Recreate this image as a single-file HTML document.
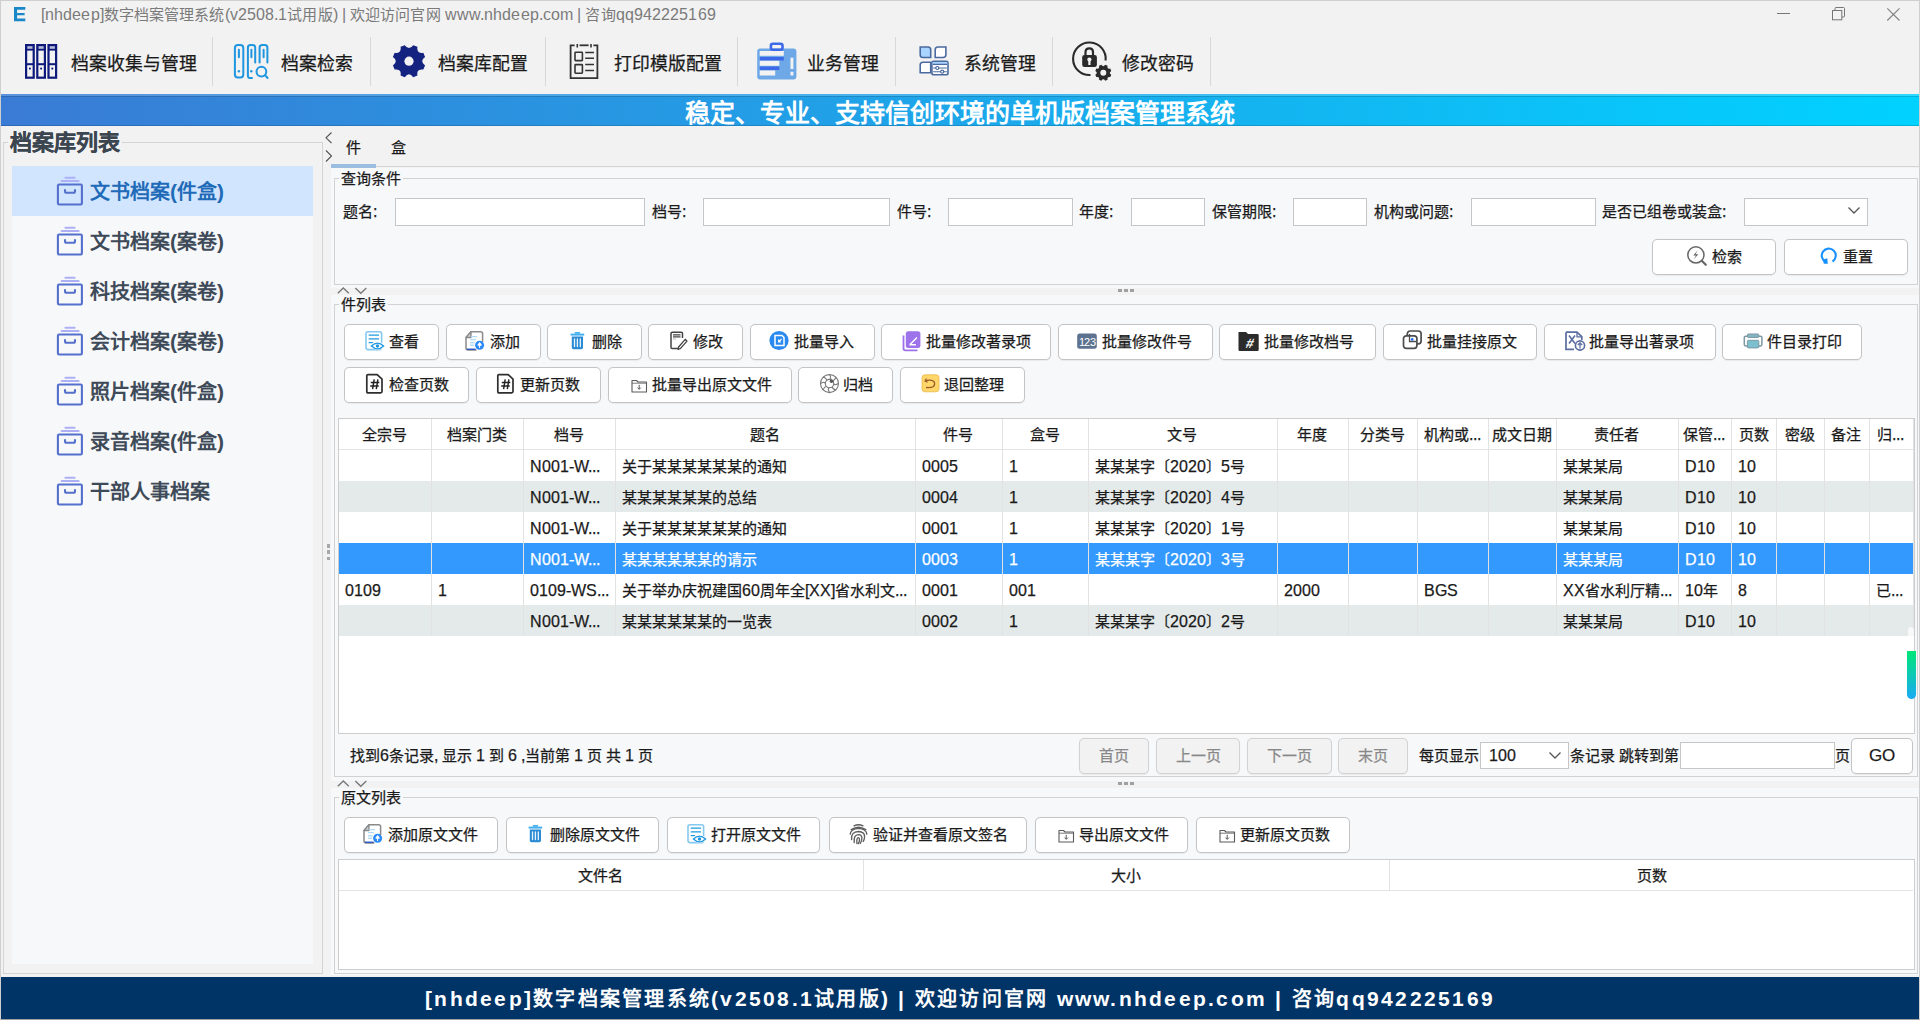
<!DOCTYPE html><html lang="zh-CN"><head><meta charset="utf-8"><style>
*{box-sizing:border-box;margin:0;padding:0}
@font-face{font-family:"Liberation Sans";src:local("Liberation Sans"),local("LiberationSans-Regular");font-weight:normal;size-adjust:106%}
@font-face{font-family:"Liberation Sans";src:local("Liberation Sans Bold"),local("LiberationSans-Bold");font-weight:bold;size-adjust:106%}
html,body{width:1920px;height:1020px;overflow:hidden;background:#f2f2f2;font-family:"Liberation Sans",sans-serif;color:#1a1a1a}
.a{position:absolute}
.t{position:absolute;white-space:nowrap;line-height:1;-webkit-text-stroke:0.25px currentColor}
svg{position:absolute;overflow:visible}
.btn{position:absolute;background:#fff;border:1px solid #c4c4c4;border-radius:5px;box-shadow:0 0.5px 1px rgba(0,0,0,.06)}
.inp{position:absolute;background:#fff;border:1px solid #c6c6c6}
</style></head><body>
<div class="a" style="left:0;top:0;width:1920px;height:1020px;border:1px solid #cfcfcf;border-bottom-color:#a0a0a0"></div>
<svg style="left:13.9px;top:6.5px" width="12" height="15"><path d="M0 0H11.3V2.7H3.1V5.9H10.6V8.2H3.1V11.6H11.3V14.3H0Z" fill="#1a88c8"/></svg>
<div class="t" style="left:41px;top:7px;font-size:15px;color:#7a7a7a;letter-spacing:0.1px;-webkit-text-stroke:0">[nhdeep]数字档案管理系统(v2508.1试用版) | 欢迎访问官网 www.nhdeep.com | 咨询qq942225169</div>
<div class="a" style="left:1777px;top:12.5px;width:12.5px;height:1px;background:#777"></div>
<svg style="left:1832px;top:7px" width="14" height="14"><rect x="0.5" y="3.5" width="9.3" height="9.3" fill="none" stroke="#777" stroke-width="1"/><path d="M3 3.3V1.5Q3 0.5 4 0.5H11.5Q12.5 0.5 12.5 1.5V9Q12.5 10 11.5 10H10" fill="none" stroke="#777" stroke-width="1"/></svg>
<svg style="left:1887px;top:7.5px" width="13" height="13"><path d="M0.3 0.3L12.5 12.5M12.5 0.3L0.3 12.5" stroke="#808080" stroke-width="1.1"/></svg>
<div class="t" style="left:71px;top:54.5px;font-size:17.85px;color:#1a1a1a">档案收集与管理</div>
<div class="a" style="left:212px;top:37px;width:1px;height:49px;background:#d8d8d8"></div>
<div class="t" style="left:281px;top:54.5px;font-size:17.85px;color:#1a1a1a">档案检索</div>
<div class="a" style="left:370px;top:37px;width:1px;height:49px;background:#d8d8d8"></div>
<div class="t" style="left:438px;top:54.5px;font-size:17.85px;color:#1a1a1a">档案库配置</div>
<div class="a" style="left:545px;top:37px;width:1px;height:49px;background:#d8d8d8"></div>
<div class="t" style="left:614px;top:54.5px;font-size:17.85px;color:#1a1a1a">打印模版配置</div>
<div class="a" style="left:737px;top:37px;width:1px;height:49px;background:#d8d8d8"></div>
<div class="t" style="left:807px;top:54.5px;font-size:17.85px;color:#1a1a1a">业务管理</div>
<div class="a" style="left:895px;top:37px;width:1px;height:49px;background:#d8d8d8"></div>
<div class="t" style="left:964px;top:54.5px;font-size:17.85px;color:#1a1a1a">系统管理</div>
<div class="a" style="left:1052px;top:37px;width:1px;height:49px;background:#d8d8d8"></div>
<div class="t" style="left:1122px;top:54.5px;font-size:17.85px;color:#1a1a1a">修改密码</div>
<div class="a" style="left:1210px;top:37px;width:1px;height:49px;background:#d8d8d8"></div>
<svg style="left:25.2px;top:44px" width="33" height="35" viewBox="0 0 33 35"><rect x="0.0" y="0" width="9.8" height="34.8" fill="#0d1a7c"/><rect x="2.3" y="2.2" width="5.2" height="2.6" fill="#b8bcd8"/><rect x="2.2" y="6.6" width="5.4" height="12.6" fill="#f2f2f2"/><rect x="2.2" y="21.2" width="5.4" height="11.4" fill="#f2f2f2"/><circle cx="4.9" cy="24.6" r="1.05" fill="#0d1a7c"/><rect x="11.2" y="0" width="9.8" height="34.8" fill="#0d1a7c"/><rect x="13.5" y="2.2" width="5.2" height="2.6" fill="#b8bcd8"/><rect x="13.399999999999999" y="6.6" width="5.4" height="12.6" fill="#f2f2f2"/><rect x="13.399999999999999" y="21.2" width="5.4" height="11.4" fill="#f2f2f2"/><circle cx="16.1" cy="24.6" r="1.05" fill="#0d1a7c"/><rect x="22.4" y="0" width="9.8" height="34.8" fill="#0d1a7c"/><rect x="24.7" y="2.2" width="5.2" height="2.6" fill="#b8bcd8"/><rect x="24.599999999999998" y="6.6" width="5.4" height="12.6" fill="#f2f2f2"/><rect x="24.599999999999998" y="21.2" width="5.4" height="11.4" fill="#f2f2f2"/><circle cx="27.299999999999997" cy="24.6" r="1.05" fill="#0d1a7c"/></svg>
<svg style="left:228px;top:38px" width="46" height="46" viewBox="0 0 46 46"><g fill="none" stroke="#1e96e0" stroke-width="2" stroke-linecap="round">
<rect x="6.9" y="6.9" width="8.4" height="32.7" rx="3"/>
<path d="M24 40 H22 Q19.9 40 19.9 37.5 V9.5 Q19.9 6.9 22.5 6.9 H24.7 Q27.2 6.9 27.2 9.5 V24.5"/>
<path d="M31.6 24.5 V9.5 Q31.6 6.9 34.2 6.9 H36.8 Q39.4 6.9 39.4 9.5 V24.5"/>
<path d="M10.9 11.7V19.3M23.4 11.7V19.3M35.6 11.7V19.3"/>
<circle cx="33.4" cy="33.6" r="4.9"/>
<path d="M37.2 37.4L39.6 40"/>
</g><circle cx="10.9" cy="33.2" r="1.2" fill="#1e96e0"/><circle cx="23.3" cy="33.2" r="1.2" fill="#1e96e0"/></svg>
<svg style="left:388px;top:40px" width="42" height="42" viewBox="0 0 42 42"><path d="M25.21 5.14L29.38 6.87Q28.21 13.99 35.33 12.82L35.33 12.82L37.06 16.99Q31.20 21.20 37.06 25.41L37.06 25.41L35.33 29.58Q28.21 28.41 29.38 35.53L29.38 35.53L25.21 37.26Q21.00 31.40 16.79 37.26L16.79 37.26L12.62 35.53Q13.79 28.41 6.67 29.58L6.67 29.58L4.94 25.41Q10.80 21.20 4.94 16.99L4.94 16.99L6.67 12.82Q13.79 13.99 12.62 6.87L12.62 6.87L16.79 5.14Q21.00 11.00 25.21 5.14Z" fill="#13237f"/><circle cx="21" cy="21.2" r="4.6" fill="#f2f2f2"/></svg>
<svg style="left:564px;top:38px" width="40" height="46" viewBox="0 0 40 46"><g fill="none" stroke="#333" stroke-width="1.8">
<path d="M10.6 7.3H6.6V40.2H33.4V7.3H29.4"/>
<path d="M15.6 7.3H24.6"/>
<path d="M13.3 6V9.5M27 6V9.5" stroke-width="1.6"/>
<rect x="11" y="14.3" width="7.4" height="8.3" stroke-width="1.6" rx="0.6"/>
<rect x="11" y="26.6" width="7.4" height="8.6" stroke-width="1.6" rx="0.6"/>
<path d="M21.2 14.6H30M21.2 20.2H30M21.2 26.4H30M21.2 32.4H30" stroke-width="1.5"/>
</g></svg>
<svg style="left:752px;top:38px" width="48" height="46" viewBox="0 0 48 46"><rect x="5.2" y="10.4" width="39.2" height="31.1" rx="3" fill="#6ea8e6"/>
<rect x="18.9" y="5.7" width="11.6" height="6" rx="2" fill="none" stroke="#3d68e8" stroke-width="2.6"/>
<rect x="7.7" y="13" width="24.1" height="4.8" fill="#f2f2f2"/>
<rect x="7.9" y="19" width="23.9" height="3.5" fill="#3d68e8"/>
<rect x="7.7" y="22.8" width="19.6" height="5" fill="#f2f2f2"/>
<rect x="7.9" y="28.5" width="19.4" height="3.5" fill="#3d68e8"/>
<rect x="7.7" y="32.5" width="15.5" height="5" fill="#f2f2f2"/>
<rect x="38.5" y="19.7" width="2.9" height="11.3" fill="#f2f2f2"/>
<rect x="38.5" y="33.8" width="2.9" height="3.7" fill="#f2f2f2"/></svg>
<svg style="left:914px;top:40px" width="40" height="42" viewBox="0 0 40 42"><g stroke="#4a6aa0" stroke-width="1.6">
<path d="M6.2 7H14Q16.7 7 16.7 9.7V17.5H9Q6.2 17.5 6.2 14.7Z" fill="#a8d4ff"/>
<path d="M23.9 7H31.9V14.5Q31.9 17.5 29 17.5H21.2V9.7Q21.2 7 23.9 7Z" fill="#fff"/>
<path d="M9 22.2H16.7V32.7H6.2V25Q6.2 22.2 9 22.2Z" fill="#fff"/>
<rect x="17.9" y="21.2" width="16.1" height="13.6" rx="1.8" fill="#fff"/>
</g>
<rect x="18.7" y="22" width="14.5" height="2.4" fill="#a8d4ff"/>
<g stroke="#4a6aa0" stroke-width="1.2" fill="#fff">
<path d="M19 24.4H33" stroke-width="1.3"/>
<path d="M19.2 28H32.8M19.2 31.7H32.8" stroke-width="1.1"/>
<circle cx="23.3" cy="28" r="1.5"/><circle cx="28.2" cy="31.7" r="1.5"/>
</g></svg>
<svg style="left:1066px;top:36px" width="50" height="50" viewBox="0 0 50 50"><path d="M39.6 24.5 A16.3 16.3 0 1 0 24.5 39" fill="none" stroke="#2a2a2a" stroke-width="2.1" stroke-linecap="butt"/>
<path d="M19.5 19.5V16.2Q19.5 12.3 23.3 12.3Q27 12.3 27 16.2V19.5" fill="none" stroke="#2a2a2a" stroke-width="2.2"/>
<rect x="16.2" y="19" width="14.7" height="11.9" rx="2.2" fill="#2a2a2a"/>
<circle cx="23.4" cy="23.6" r="2.1" fill="#f2f2f2"/><rect x="22.3" y="24" width="2.2" height="5" fill="#f2f2f2"/>
<circle cx="37.3" cy="36.8" r="8.8" fill="#f2f2f2"/>
<path d="M39.21 28.83L41.58 29.81Q40.84 33.26 44.29 32.52L44.29 32.52L45.27 34.89Q42.30 36.80 45.27 38.71L45.27 38.71L44.29 41.08Q40.84 40.34 41.58 43.79L41.58 43.79L39.21 44.77Q37.30 41.80 35.39 44.77L35.39 44.77L33.02 43.79Q33.76 40.34 30.31 41.08L30.31 41.08L29.33 38.71Q32.30 36.80 29.33 34.89L29.33 34.89L30.31 32.52Q33.76 33.26 33.02 29.81L33.02 29.81L35.39 28.83Q37.30 31.80 39.21 28.83Z" fill="#2a2a2a"/><circle cx="37.3" cy="36.8" r="3" fill="#f2f2f2"/></svg>
<div class="a" style="left:1px;top:94px;width:1918px;height:32px;background:linear-gradient(90deg,#3a7bd5,#00d2ff)"></div>
<div class="a" style="left:1px;top:94px;width:1918px;height:2px;background:rgba(255,255,255,.18)"></div>
<div class="a" style="left:1px;top:96px;width:1918px;height:1px;background:rgba(0,0,0,.15)"></div>
<div class="a" style="left:1px;top:125px;width:1918px;height:1px;background:rgba(0,0,0,.15)"></div>
<div class="t" style="left:0;top:101px;width:1920px;text-align:center;font-size:25px;font-weight:bold;color:#fff;-webkit-text-stroke:0">稳定、专业、支持信创环境的单机版档案管理系统</div>
<div class="a" style="left:3px;top:142px;width:320px;height:832px;border:1px solid #d4d4d4;border-top-color:#d4d4d4"></div>
<div class="a" style="left:12px;top:166px;width:301px;height:797.5px;background:#f7f8fa"></div>
<div class="t" style="left:8px;top:131px;padding:0 2px;background:#f2f2f2;font-size:22px;font-weight:bold;color:#3c4650;-webkit-text-stroke:0.2px #3c4650">档案库列表</div>
<div class="a" style="left:12px;top:166px;width:301px;height:50px;background:#d1e5fe"></div>
<div class="t" style="left:90px;top:182px;font-size:20px;font-weight:bold;color:#1f6bb8;-webkit-text-stroke:0">文书档案(件盒)</div>
<svg style="left:56px;top:176px" width="28" height="30" viewBox="0 0 28 30"><path d="M9.4 1.7H18.6" stroke="#aeb0f6" stroke-width="2" stroke-linecap="round"/><path d="M5.6 4.9H22.6" stroke="#aeb0f6" stroke-width="2" stroke-linecap="round"/><rect x="1.9" y="8.5" width="24" height="20" rx="1.2" fill="none" stroke="#5570cc" stroke-width="2.1"/><path d="M9 14V15.2Q9 16.7 10.5 16.7H17.5Q19 16.7 19 15.2V14" fill="none" stroke="#5570cc" stroke-width="2.1" stroke-linecap="round"/></svg>
<div class="t" style="left:90px;top:232px;font-size:20px;font-weight:bold;color:#3e4a58;-webkit-text-stroke:0">文书档案(案卷)</div>
<svg style="left:56px;top:226px" width="28" height="30" viewBox="0 0 28 30"><path d="M9.4 1.7H18.6" stroke="#aeb0f6" stroke-width="2" stroke-linecap="round"/><path d="M5.6 4.9H22.6" stroke="#aeb0f6" stroke-width="2" stroke-linecap="round"/><rect x="1.9" y="8.5" width="24" height="20" rx="1.2" fill="none" stroke="#5570cc" stroke-width="2.1"/><path d="M9 14V15.2Q9 16.7 10.5 16.7H17.5Q19 16.7 19 15.2V14" fill="none" stroke="#5570cc" stroke-width="2.1" stroke-linecap="round"/></svg>
<div class="t" style="left:90px;top:282px;font-size:20px;font-weight:bold;color:#3e4a58;-webkit-text-stroke:0">科技档案(案卷)</div>
<svg style="left:56px;top:276px" width="28" height="30" viewBox="0 0 28 30"><path d="M9.4 1.7H18.6" stroke="#aeb0f6" stroke-width="2" stroke-linecap="round"/><path d="M5.6 4.9H22.6" stroke="#aeb0f6" stroke-width="2" stroke-linecap="round"/><rect x="1.9" y="8.5" width="24" height="20" rx="1.2" fill="none" stroke="#5570cc" stroke-width="2.1"/><path d="M9 14V15.2Q9 16.7 10.5 16.7H17.5Q19 16.7 19 15.2V14" fill="none" stroke="#5570cc" stroke-width="2.1" stroke-linecap="round"/></svg>
<div class="t" style="left:90px;top:332px;font-size:20px;font-weight:bold;color:#3e4a58;-webkit-text-stroke:0">会计档案(案卷)</div>
<svg style="left:56px;top:326px" width="28" height="30" viewBox="0 0 28 30"><path d="M9.4 1.7H18.6" stroke="#aeb0f6" stroke-width="2" stroke-linecap="round"/><path d="M5.6 4.9H22.6" stroke="#aeb0f6" stroke-width="2" stroke-linecap="round"/><rect x="1.9" y="8.5" width="24" height="20" rx="1.2" fill="none" stroke="#5570cc" stroke-width="2.1"/><path d="M9 14V15.2Q9 16.7 10.5 16.7H17.5Q19 16.7 19 15.2V14" fill="none" stroke="#5570cc" stroke-width="2.1" stroke-linecap="round"/></svg>
<div class="t" style="left:90px;top:382px;font-size:20px;font-weight:bold;color:#3e4a58;-webkit-text-stroke:0">照片档案(件盒)</div>
<svg style="left:56px;top:376px" width="28" height="30" viewBox="0 0 28 30"><path d="M9.4 1.7H18.6" stroke="#aeb0f6" stroke-width="2" stroke-linecap="round"/><path d="M5.6 4.9H22.6" stroke="#aeb0f6" stroke-width="2" stroke-linecap="round"/><rect x="1.9" y="8.5" width="24" height="20" rx="1.2" fill="none" stroke="#5570cc" stroke-width="2.1"/><path d="M9 14V15.2Q9 16.7 10.5 16.7H17.5Q19 16.7 19 15.2V14" fill="none" stroke="#5570cc" stroke-width="2.1" stroke-linecap="round"/></svg>
<div class="t" style="left:90px;top:432px;font-size:20px;font-weight:bold;color:#3e4a58;-webkit-text-stroke:0">录音档案(件盒)</div>
<svg style="left:56px;top:426px" width="28" height="30" viewBox="0 0 28 30"><path d="M9.4 1.7H18.6" stroke="#aeb0f6" stroke-width="2" stroke-linecap="round"/><path d="M5.6 4.9H22.6" stroke="#aeb0f6" stroke-width="2" stroke-linecap="round"/><rect x="1.9" y="8.5" width="24" height="20" rx="1.2" fill="none" stroke="#5570cc" stroke-width="2.1"/><path d="M9 14V15.2Q9 16.7 10.5 16.7H17.5Q19 16.7 19 15.2V14" fill="none" stroke="#5570cc" stroke-width="2.1" stroke-linecap="round"/></svg>
<div class="t" style="left:90px;top:482px;font-size:20px;font-weight:bold;color:#3e4a58;-webkit-text-stroke:0">干部人事档案</div>
<svg style="left:56px;top:476px" width="28" height="30" viewBox="0 0 28 30"><path d="M9.4 1.7H18.6" stroke="#aeb0f6" stroke-width="2" stroke-linecap="round"/><path d="M5.6 4.9H22.6" stroke="#aeb0f6" stroke-width="2" stroke-linecap="round"/><rect x="1.9" y="8.5" width="24" height="20" rx="1.2" fill="none" stroke="#5570cc" stroke-width="2.1"/><path d="M9 14V15.2Q9 16.7 10.5 16.7H17.5Q19 16.7 19 15.2V14" fill="none" stroke="#5570cc" stroke-width="2.1" stroke-linecap="round"/></svg>
<svg style="left:325px;top:132px" width="8" height="30"><path d="M6.5 0.5L1 5.8L6.5 11" fill="none" stroke="#555" stroke-width="1.1"/><path d="M1 18.5L6.5 24L1 29.5" fill="none" stroke="#555" stroke-width="1.1"/></svg>
<div class="a" style="left:326.5px;top:544.0px;width:3.5px;height:3.5px;background:#a8a8a8"></div><div class="a" style="left:326.5px;top:550.3px;width:3.5px;height:3.5px;background:#a8a8a8"></div><div class="a" style="left:326.5px;top:556.6px;width:3.5px;height:3.5px;background:#a8a8a8"></div>
<div class="t" style="left:346px;top:140px;font-size:15px;color:#1a1a1a">件</div>
<div class="t" style="left:391px;top:140px;font-size:15px;color:#1a1a1a">盒</div>
<div class="a" style="left:331px;top:166px;width:1589px;height:1px;background:#d4d4d4"></div>
<div class="a" style="left:331px;top:164px;width:45px;height:4px;background:#9bbde0"></div>
<div class="a" style="left:331px;top:168px;width:1588px;height:807px;background:#f7f8fa"></div>
<div class="a" style="left:334px;top:178px;width:1584px;height:107px;border:1px solid #d2d2d2"></div>
<div class="t" style="left:339px;top:171px;padding:0 2px;background:#f7f8fa;font-size:15px;color:#1a1a1a">查询条件</div>
<div class="t" style="left:343px;top:204px;font-size:15px;color:#1a1a1a">题名:</div>
<div class="inp" style="left:395px;top:198px;width:250px;height:28px"></div>
<div class="t" style="left:652px;top:204px;font-size:15px;color:#1a1a1a">档号:</div>
<div class="inp" style="left:703px;top:198px;width:187px;height:28px"></div>
<div class="t" style="left:897px;top:204px;font-size:15px;color:#1a1a1a">件号:</div>
<div class="inp" style="left:948px;top:198px;width:125px;height:28px"></div>
<div class="t" style="left:1079px;top:204px;font-size:15px;color:#1a1a1a">年度:</div>
<div class="inp" style="left:1131px;top:198px;width:74px;height:28px"></div>
<div class="t" style="left:1212px;top:204px;font-size:15px;color:#1a1a1a">保管期限:</div>
<div class="inp" style="left:1293px;top:198px;width:74px;height:28px"></div>
<div class="t" style="left:1374px;top:204px;font-size:15px;color:#1a1a1a">机构或问题:</div>
<div class="inp" style="left:1471px;top:198px;width:125px;height:28px"></div>
<div class="t" style="left:1602px;top:204px;font-size:15px;color:#1a1a1a">是否已组卷或装盒:</div>
<div class="inp" style="left:1744px;top:198px;width:124px;height:28px"></div>
<svg style="left:1848px;top:207px" width="12" height="8"><path d="M0.5 0.5L6 6L11.5 0.5" fill="none" stroke="#555" stroke-width="1.3"/></svg>
<div class="btn" style="left:1652px;top:239px;width:124px;height:36px"></div>
<div class="t" style="left:1712px;top:249px;font-size:15px">检索</div>
<div class="btn" style="left:1784px;top:239px;width:124px;height:36px"></div>
<div class="t" style="left:1843px;top:249px;font-size:15px">重置</div>
<svg style="left:1680px;top:242px" width="30" height="30"><circle cx="15.9" cy="12.9" r="8.1" fill="none" stroke="#666" stroke-width="1.5"/><path d="M21.8 18.8L25.8 22.8" stroke="#666" stroke-width="2.2" stroke-linecap="round"/><path d="M17.6 8.6L13.2 13.6H16L13.6 17.6L18.4 12.2H15.6Z" fill="#666"/></svg>
<svg style="left:1812px;top:242px" width="30" height="30"><path d="M20.5 19.5A7 7 0 1 0 14 20" fill="none" stroke="#1a90ff" stroke-width="2.1"/><path d="M11 17.5L15.3 16.2L15.8 21.8L11.8 21.8Z" fill="#1a90ff"/></svg>
<div class="a" style="left:331px;top:288px;width:1588px;height:6.5px;background:#f2f2f2"></div>
<svg style="left:337px;top:287px" width="32" height="8"><path d="M0.8 6.3L6.3 1L11.8 6.3" fill="none" stroke="#777" stroke-width="1.3"/><path d="M18.3 1L23.8 6.3L29.3 1" fill="none" stroke="#777" stroke-width="1.3"/></svg>
<div class="a" style="left:1118px;top:288.5px;width:3.5px;height:3.5px;background:#a0a0a0"></div>
<div class="a" style="left:1124px;top:288.5px;width:3.5px;height:3.5px;background:#a0a0a0"></div>
<div class="a" style="left:1130px;top:288.5px;width:3.5px;height:3.5px;background:#a0a0a0"></div>
<div class="a" style="left:334px;top:304px;width:1584px;height:473px;border:1px solid #d2d2d2"></div>
<div class="t" style="left:339px;top:297px;padding:0 2px;background:#f7f8fa;font-size:15px;color:#1a1a1a">件列表</div>
<div class="btn" style="left:344px;top:324px;width:95px;height:36px"></div>
<div class="t" style="left:388.5px;top:334px;font-size:15px">查看</div>
<svg style="left:364.5px;top:331px" width="20" height="20" viewBox="0 0 20 20"><rect x="1" y="0.8" width="15.6" height="17.8" rx="2" fill="none" stroke="#86c8ef" stroke-width="1.6"/>
<path d="M4.2 4.2H13.5M4.2 7.9H13.5M4.2 11.7H7.5" stroke="#1f9ae0" stroke-width="1.3" stroke-linecap="round"/>
<ellipse cx="12.6" cy="15" rx="6.6" ry="3.8" fill="#fff"/>
<path d="M6.4 15Q12.4 9.2 18.6 15Q12.4 20.8 6.4 15Z" fill="#fff" stroke="#1e96e0" stroke-width="1.3"/>
<circle cx="12.5" cy="15" r="1.7" fill="#1e96e0"/></svg>
<div class="btn" style="left:445.5px;top:324px;width:95px;height:36px"></div>
<div class="t" style="left:490.0px;top:334px;font-size:15px">添加</div>
<svg style="left:466.0px;top:331px" width="20" height="20" viewBox="0 0 20 20"><path d="M16.6 11V2.6Q16.6 0.7 14.7 0.7H5L0 6.5V17Q0 18.9 1.9 18.9H10.5" fill="#fff" stroke="#8a8a8a" stroke-width="1.5"/>
<path d="M5 0.7V6.5H0Z" fill="#c8d3dc" stroke="#8a8a8a" stroke-width="1.3" stroke-linejoin="round"/>
<path d="M5 5.6H11M4 8.6H10M4 11.8H8.5M4 14.3H8" stroke="#b5dbf8" stroke-width="1.4"/>
<path d="M1 18.2H9.5" stroke="#1144cc" stroke-width="1.2"/>
<circle cx="13.6" cy="14.2" r="4.5" fill="#2b8af8"/>
<path d="M13.6 11.5L11.8 14.2H15.4Z M13.6 14V17" stroke="#fff" stroke-width="1" fill="#fff"/></svg>
<div class="btn" style="left:547px;top:324px;width:95px;height:36px"></div>
<div class="t" style="left:591.5px;top:334px;font-size:15px">删除</div>
<svg style="left:567.5px;top:331px" width="20" height="20" viewBox="0 0 20 20"><path d="M7.5 1.8H11.3" stroke="#45b0f0" stroke-width="1.8" stroke-linecap="round"/>
<path d="M2.6 3.6H16.2" stroke="#45b0f0" stroke-width="2"/>
<path d="M3.8 5.6H15V16.5Q15 18.2 13.3 18.2H5.5Q3.8 18.2 3.8 16.5Z" fill="#2a8ad4"/>
<path d="M6.5 8V15.6M9.4 8V15.6M12.3 8V15.6" stroke="#e8f4fc" stroke-width="1.3" stroke-linecap="round"/></svg>
<div class="btn" style="left:648px;top:324px;width:95px;height:36px"></div>
<div class="t" style="left:692.5px;top:334px;font-size:15px">修改</div>
<svg style="left:668.5px;top:331px" width="20" height="20" viewBox="0 0 20 20"><path d="M13.5 7V2.5Q13.5 1.2 12.2 1.2H3.3Q2 1.2 2 2.5V16.2Q2 17.5 3.3 17.5H9" fill="none" stroke="#444" stroke-width="1.5"/>
<path d="M4 3.8H11.5M4 5.8H11.5" stroke="#444" stroke-width="1.2"/>
<path d="M4 8H7" stroke="#aaa" stroke-width="0.8"/>
<path d="M16.2 8.3L18 10.1L11.3 17.6L9 18.3L9.6 16Z" fill="#fff" stroke="#444" stroke-width="1.3" stroke-linejoin="round"/></svg>
<div class="btn" style="left:749.5px;top:324px;width:125px;height:36px"></div>
<div class="t" style="left:794.0px;top:334px;font-size:15px">批量导入</div>
<svg style="left:770.0px;top:331px" width="20" height="20" viewBox="0 0 20 20"><circle cx="9" cy="9.5" r="9.6" fill="#2a8af0"/>
<path d="M5 4.5H12L14 6.5V14.5H5Z" fill="none" stroke="#fff" stroke-width="1.5"/>
<path d="M11.5 8L8.8 10.8M8.6 8.5V11H11" fill="none" stroke="#fff" stroke-width="1.2"/></svg>
<div class="btn" style="left:881px;top:324px;width:170px;height:36px"></div>
<div class="t" style="left:925.5px;top:334px;font-size:15px">批量修改著录项</div>
<svg style="left:901.5px;top:331px" width="20" height="20" viewBox="0 0 20 20"><path d="M1.5 4.5V17.5Q1.5 19.3 3.3 19.3H15.5" fill="none" stroke="#9d72ea" stroke-width="1.8"/>
<rect x="3.8" y="0.3" width="14.6" height="16.8" rx="2.5" fill="#9d72ea"/>
<path d="M10 1.5 L17 1.5" stroke="#b493f0" stroke-width="0"/>
<path d="M8 13.5L15 6.5M7.5 13.8H14" stroke="#fff" stroke-width="1.5"/></svg>
<div class="btn" style="left:1057.5px;top:324px;width:155px;height:36px"></div>
<div class="t" style="left:1102.0px;top:334px;font-size:15px">批量修改件号</div>
<svg style="left:1078.0px;top:331px" width="20" height="20" viewBox="0 0 20 20"><rect x="-0.8" y="2.5" width="19.6" height="15.2" rx="2.5" fill="#5c7290"/>
<text x="9" y="14.6" text-anchor="middle" font-family="Liberation Sans" font-size="10.8" fill="#fff" letter-spacing="-0.9">123</text></svg>
<div class="btn" style="left:1218.5px;top:324px;width:157px;height:36px"></div>
<div class="t" style="left:1264.0px;top:334px;font-size:15px">批量修改档号</div>
<svg style="left:1240.0px;top:331px" width="20" height="20" viewBox="0 0 20 20"><path d="M-1.5 1H6L8 3H17.5Q18.7 3 18.7 4.2V18.8Q18.7 20 17.5 20H-0.3Q-1.5 20 -1.5 18.8Z" fill="#2b2b2b"/>
<text x="8.5" y="16.8" text-anchor="middle" font-family="Liberation Sans" font-weight="bold" font-size="13" fill="#fff" font-style="italic">#</text></svg>
<div class="btn" style="left:1383px;top:324px;width:154px;height:36px"></div>
<div class="t" style="left:1427.0px;top:334px;font-size:15px">批量挂接原文</div>
<svg style="left:1403.0px;top:331px" width="20" height="20" viewBox="0 0 20 20"><rect x="4.3" y="0" width="13.8" height="12.8" rx="2.8" fill="#fff" stroke="#4c4c4c" stroke-width="1.7"/>
<rect x="0.5" y="4.8" width="13.4" height="12.6" rx="2.8" fill="#fff" stroke="#4c4c4c" stroke-width="1.7"/>
<path d="M6.5 3 V 10.5 H 13.5" fill="none" stroke="#4c4c4c" stroke-width="1.3"/>
<circle cx="9.2" cy="8.4" r="1.3" fill="#1c6cf0"/></svg>
<div class="btn" style="left:1543.5px;top:324px;width:172px;height:36px"></div>
<div class="t" style="left:1589.0px;top:334px;font-size:15px">批量导出著录项</div>
<svg style="left:1565.0px;top:331px" width="20" height="20" viewBox="0 0 20 20"><path d="M1 1.2H12L16.8 5.6V9" fill="none" stroke="#5a6ea0" stroke-width="1.7"/>
<path d="M12 1.2V5.8H16.8" fill="none" stroke="#5a6ea0" stroke-width="1.3"/>
<path d="M1 1.2V18.3H9" fill="none" stroke="#5a6ea0" stroke-width="1.7"/>
<path d="M4 4.5L10 12.5M10 4.5L4 12.5" stroke="#5a6ea0" stroke-width="1.6"/>
<circle cx="15" cy="14.5" r="4.6" fill="#fff" stroke="#5a6ea0" stroke-width="1.6"/>
<path d="M15 17.5V12M12.8 14L15 11.8L17.2 14" fill="none" stroke="#5a6ea0" stroke-width="1.3"/></svg>
<div class="btn" style="left:1722px;top:324px;width:140px;height:36px"></div>
<div class="t" style="left:1766.5px;top:334px;font-size:15px">件目录打印</div>
<svg style="left:1742.5px;top:331px" width="20" height="20" viewBox="0 0 20 20"><g transform="translate(0 2.3)"><rect x="1.3" y="3" width="17.6" height="9.6" rx="1.3" fill="#fff" stroke="#7d98a2" stroke-width="1.5"/>
<rect x="4.4" y="0.7" width="11.4" height="3.5" rx="1" fill="#86b4c2" stroke="#7d98a2" stroke-width="1"/>
<rect x="4.4" y="7" width="11.4" height="7.6" rx="1" fill="#7cc0cf" stroke="#7d98a2" stroke-width="1"/></g></svg>
<div class="btn" style="left:344px;top:367px;width:125px;height:35.5px"></div>
<div class="t" style="left:388.5px;top:377px;font-size:15px">检查页数</div>
<svg style="left:364.5px;top:374px" width="20" height="20" viewBox="0 0 20 20"><path d="M1.8 1.8Q1.8 0.6 3 0.6H12.2L17 5.2V17.6Q17 18.9 15.7 18.9H3Q1.8 18.9 1.8 17.6Z" fill="#fff" stroke="#2e2e2e" stroke-width="1.7" stroke-linejoin="round"/>
<path d="M9.2 5.3L7.6 15.2M12.9 5.3L11.3 15.2M5.8 8.4H14.3M5.2 12H13.7" stroke="#222" stroke-width="1.45"/></svg>
<div class="btn" style="left:475.5px;top:367px;width:125px;height:35.5px"></div>
<div class="t" style="left:520.0px;top:377px;font-size:15px">更新页数</div>
<svg style="left:496.0px;top:374px" width="20" height="20" viewBox="0 0 20 20"><path d="M1.8 1.8Q1.8 0.6 3 0.6H12.2L17 5.2V17.6Q17 18.9 15.7 18.9H3Q1.8 18.9 1.8 17.6Z" fill="#fff" stroke="#2e2e2e" stroke-width="1.7" stroke-linejoin="round"/>
<path d="M9.2 5.3L7.6 15.2M12.9 5.3L11.3 15.2M5.8 8.4H14.3M5.2 12H13.7" stroke="#222" stroke-width="1.45"/></svg>
<div class="btn" style="left:607.5px;top:367px;width:184px;height:35.5px"></div>
<div class="t" style="left:651.5px;top:377px;font-size:15px">批量导出原文文件</div>
<svg style="left:627.5px;top:374px" width="20" height="20" viewBox="0 0 20 20"><path d="M4 6.5H8.5L10 8H18.5V18H4Z" fill="#fff" stroke="#5a5a5a" stroke-width="1.1" stroke-linejoin="round"/>
<path d="M4 9.2H18.5" stroke="#5a5a5a" stroke-width="0.8"/>
<path d="M11.2 10.8V15.2M9.5 13.6L11.2 15.3L12.9 13.6" fill="none" stroke="#5a5a5a" stroke-width="1"/></svg>
<div class="btn" style="left:798px;top:367px;width:95px;height:35.5px"></div>
<div class="t" style="left:842.5px;top:377px;font-size:15px">归档</div>
<svg style="left:818.5px;top:374px" width="20" height="20" viewBox="0 0 20 20"><g fill="none" stroke="#777" stroke-width="1.1">
<circle cx="10.5" cy="9.6" r="9"/>
<circle cx="10.5" cy="9.6" r="4.2"/>
<path d="M10.5 0.6Q13 5 10.5 5.4M19.5 9.6Q15 12 14.7 9.6M10.5 18.6Q8 14 10.5 13.8M1.5 9.6Q6 7 6.3 9.6M3.9 3.2Q8 4 7.5 6.7M17.1 3.2Q15 7 13.5 6.7M17.1 16Q13 15 13.5 12.5M3.9 16Q6 12 7.5 12.5"/>
</g><circle cx="12.5" cy="7.3" r="1.8" fill="#555"/></svg>
<div class="btn" style="left:899.5px;top:367px;width:125px;height:35.5px"></div>
<div class="t" style="left:944.0px;top:377px;font-size:15px">退回整理</div>
<svg style="left:920.0px;top:374px" width="20" height="20" viewBox="0 0 20 20"><rect x="2" y="0.8" width="17" height="17" rx="3" fill="#ffd66a" stroke="#e8b84a" stroke-width="0.8"/>
<path d="M6.5 4.5L5 7L7.6 8.2" fill="none" stroke="#9a5a2a" stroke-width="1.2"/>
<path d="M5.3 7Q10 5 14 7.5Q15.5 10 13.5 12.5Q11 14 6 13.5" fill="none" stroke="#9a5a2a" stroke-width="1.3"/></svg>
<!--BICONS-->
<div class="a" style="left:338px;top:418px;width:1577px;height:316px;background:#fff;border:1px solid #cdcdcd"></div>
<div class="a" style="left:339px;top:450px;width:1574px;height:31px;background:#fff"></div>
<div class="a" style="left:339px;top:481px;width:1574px;height:31px;background:#e4eae9"></div>
<div class="a" style="left:339px;top:512px;width:1574px;height:31px;background:#fff"></div>
<div class="a" style="left:339px;top:543px;width:1574px;height:31px;background:#3399ff"></div>
<div class="a" style="left:339px;top:574px;width:1574px;height:31px;background:#fff"></div>
<div class="a" style="left:339px;top:605px;width:1574px;height:31px;background:#e4eae9"></div>
<div class="a" style="left:339px;top:449px;width:1574px;height:1px;background:#e4e4e4"></div>
<div class="a" style="left:430.6px;top:419px;width:1px;height:217px;background:#e2e2e2"></div>
<div class="a" style="left:523.0px;top:419px;width:1px;height:217px;background:#e2e2e2"></div>
<div class="a" style="left:615.3px;top:419px;width:1px;height:217px;background:#e2e2e2"></div>
<div class="a" style="left:914.5px;top:419px;width:1px;height:217px;background:#e2e2e2"></div>
<div class="a" style="left:1002.0px;top:419px;width:1px;height:217px;background:#e2e2e2"></div>
<div class="a" style="left:1088.4px;top:419px;width:1px;height:217px;background:#e2e2e2"></div>
<div class="a" style="left:1276.6px;top:419px;width:1px;height:217px;background:#e2e2e2"></div>
<div class="a" style="left:1348.4px;top:419px;width:1px;height:217px;background:#e2e2e2"></div>
<div class="a" style="left:1417.2px;top:419px;width:1px;height:217px;background:#e2e2e2"></div>
<div class="a" style="left:1487.5px;top:419px;width:1px;height:217px;background:#e2e2e2"></div>
<div class="a" style="left:1555.5px;top:419px;width:1px;height:217px;background:#e2e2e2"></div>
<div class="a" style="left:1677.5px;top:419px;width:1px;height:217px;background:#e2e2e2"></div>
<div class="a" style="left:1731.0px;top:419px;width:1px;height:217px;background:#e2e2e2"></div>
<div class="a" style="left:1776.0px;top:419px;width:1px;height:217px;background:#e2e2e2"></div>
<div class="a" style="left:1823.8px;top:419px;width:1px;height:217px;background:#e2e2e2"></div>
<div class="a" style="left:1868.8px;top:419px;width:1px;height:217px;background:#e2e2e2"></div>
<div class="a" style="left:1912.5px;top:419px;width:1px;height:217px;background:#e2e2e2"></div>
<div class="t" style="left:338.0px;top:427px;width:92.6px;text-align:center;font-size:15px">全宗号</div>
<div class="t" style="left:430.6px;top:427px;width:92.4px;text-align:center;font-size:15px">档案门类</div>
<div class="t" style="left:523.0px;top:427px;width:92.3px;text-align:center;font-size:15px">档号</div>
<div class="t" style="left:615.3px;top:427px;width:299.2px;text-align:center;font-size:15px">题名</div>
<div class="t" style="left:914.5px;top:427px;width:87.5px;text-align:center;font-size:15px">件号</div>
<div class="t" style="left:1002.0px;top:427px;width:86.4px;text-align:center;font-size:15px">盒号</div>
<div class="t" style="left:1088.4px;top:427px;width:188.2px;text-align:center;font-size:15px">文号</div>
<div class="t" style="left:1276.6px;top:427px;width:71.8px;text-align:center;font-size:15px">年度</div>
<div class="t" style="left:1348.4px;top:427px;width:68.8px;text-align:center;font-size:15px">分类号</div>
<div class="t" style="left:1417.2px;top:427px;width:70.3px;text-align:center;font-size:15px">机构或...</div>
<div class="t" style="left:1487.5px;top:427px;width:68.0px;text-align:center;font-size:15px">成文日期</div>
<div class="t" style="left:1555.5px;top:427px;width:122.0px;text-align:center;font-size:15px">责任者</div>
<div class="t" style="left:1677.5px;top:427px;width:53.5px;text-align:center;font-size:15px">保管...</div>
<div class="t" style="left:1731.0px;top:427px;width:45.0px;text-align:center;font-size:15px">页数</div>
<div class="t" style="left:1776.0px;top:427px;width:47.8px;text-align:center;font-size:15px">密级</div>
<div class="t" style="left:1823.8px;top:427px;width:45.0px;text-align:center;font-size:15px">备注</div>
<div class="t" style="left:1868.8px;top:427px;width:43.8px;text-align:center;font-size:15px">归...</div>
<div class="t" style="left:530.0px;top:459px;font-size:15px;color:#1a1a1a">N001-W...</div>
<div class="t" style="left:622.3px;top:459px;font-size:15px;color:#1a1a1a">关于某某某某某某的通知</div>
<div class="t" style="left:921.5px;top:459px;font-size:15px;color:#1a1a1a">0005</div>
<div class="t" style="left:1009.0px;top:459px;font-size:15px;color:#1a1a1a">1</div>
<div class="t" style="left:1095.4px;top:459px;font-size:15px;color:#1a1a1a">某某某字〔2020〕5号</div>
<div class="t" style="left:1562.5px;top:459px;font-size:15px;color:#1a1a1a">某某某局</div>
<div class="t" style="left:1684.5px;top:459px;font-size:15px;color:#1a1a1a">D10</div>
<div class="t" style="left:1738.0px;top:459px;font-size:15px;color:#1a1a1a">10</div>
<div class="t" style="left:530.0px;top:490px;font-size:15px;color:#1a1a1a">N001-W...</div>
<div class="t" style="left:622.3px;top:490px;font-size:15px;color:#1a1a1a">某某某某某某的总结</div>
<div class="t" style="left:921.5px;top:490px;font-size:15px;color:#1a1a1a">0004</div>
<div class="t" style="left:1009.0px;top:490px;font-size:15px;color:#1a1a1a">1</div>
<div class="t" style="left:1095.4px;top:490px;font-size:15px;color:#1a1a1a">某某某字〔2020〕4号</div>
<div class="t" style="left:1562.5px;top:490px;font-size:15px;color:#1a1a1a">某某某局</div>
<div class="t" style="left:1684.5px;top:490px;font-size:15px;color:#1a1a1a">D10</div>
<div class="t" style="left:1738.0px;top:490px;font-size:15px;color:#1a1a1a">10</div>
<div class="t" style="left:530.0px;top:521px;font-size:15px;color:#1a1a1a">N001-W...</div>
<div class="t" style="left:622.3px;top:521px;font-size:15px;color:#1a1a1a">关于某某某某某某的通知</div>
<div class="t" style="left:921.5px;top:521px;font-size:15px;color:#1a1a1a">0001</div>
<div class="t" style="left:1009.0px;top:521px;font-size:15px;color:#1a1a1a">1</div>
<div class="t" style="left:1095.4px;top:521px;font-size:15px;color:#1a1a1a">某某某字〔2020〕1号</div>
<div class="t" style="left:1562.5px;top:521px;font-size:15px;color:#1a1a1a">某某某局</div>
<div class="t" style="left:1684.5px;top:521px;font-size:15px;color:#1a1a1a">D10</div>
<div class="t" style="left:1738.0px;top:521px;font-size:15px;color:#1a1a1a">10</div>
<div class="t" style="left:530.0px;top:552px;font-size:15px;color:#fff">N001-W...</div>
<div class="t" style="left:622.3px;top:552px;font-size:15px;color:#fff">某某某某某某的请示</div>
<div class="t" style="left:921.5px;top:552px;font-size:15px;color:#fff">0003</div>
<div class="t" style="left:1009.0px;top:552px;font-size:15px;color:#fff">1</div>
<div class="t" style="left:1095.4px;top:552px;font-size:15px;color:#fff">某某某字〔2020〕3号</div>
<div class="t" style="left:1562.5px;top:552px;font-size:15px;color:#fff">某某某局</div>
<div class="t" style="left:1684.5px;top:552px;font-size:15px;color:#fff">D10</div>
<div class="t" style="left:1738.0px;top:552px;font-size:15px;color:#fff">10</div>
<div class="t" style="left:345.0px;top:583px;font-size:15px;color:#1a1a1a">0109</div>
<div class="t" style="left:437.6px;top:583px;font-size:15px;color:#1a1a1a">1</div>
<div class="t" style="left:530.0px;top:583px;font-size:15px;color:#1a1a1a">0109-WS...</div>
<div class="t" style="left:622.3px;top:583px;font-size:15px;color:#1a1a1a">关于举办庆祝建国60周年全[XX]省水利文...</div>
<div class="t" style="left:921.5px;top:583px;font-size:15px;color:#1a1a1a">0001</div>
<div class="t" style="left:1009.0px;top:583px;font-size:15px;color:#1a1a1a">001</div>
<div class="t" style="left:1283.6px;top:583px;font-size:15px;color:#1a1a1a">2000</div>
<div class="t" style="left:1424.2px;top:583px;font-size:15px;color:#1a1a1a">BGS</div>
<div class="t" style="left:1562.5px;top:583px;font-size:15px;color:#1a1a1a">XX省水利厅精...</div>
<div class="t" style="left:1684.5px;top:583px;font-size:15px;color:#1a1a1a">10年</div>
<div class="t" style="left:1738.0px;top:583px;font-size:15px;color:#1a1a1a">8</div>
<div class="t" style="left:1875.8px;top:583px;font-size:15px;color:#1a1a1a">已...</div>
<div class="t" style="left:530.0px;top:614px;font-size:15px;color:#1a1a1a">N001-W...</div>
<div class="t" style="left:622.3px;top:614px;font-size:15px;color:#1a1a1a">某某某某某某的一览表</div>
<div class="t" style="left:921.5px;top:614px;font-size:15px;color:#1a1a1a">0002</div>
<div class="t" style="left:1009.0px;top:614px;font-size:15px;color:#1a1a1a">1</div>
<div class="t" style="left:1095.4px;top:614px;font-size:15px;color:#1a1a1a">某某某字〔2020〕2号</div>
<div class="t" style="left:1562.5px;top:614px;font-size:15px;color:#1a1a1a">某某某局</div>
<div class="t" style="left:1684.5px;top:614px;font-size:15px;color:#1a1a1a">D10</div>
<div class="t" style="left:1738.0px;top:614px;font-size:15px;color:#1a1a1a">10</div>
<div class="a" style="left:1908px;top:627px;width:6px;height:30px;border-radius:3px;background:rgba(255,255,255,.7)"></div>
<div class="a" style="left:1907px;top:650.5px;width:9px;height:48.5px;border-radius:0 0 4.5px 4.5px;background:linear-gradient(#00e676,#1aaaf5)"></div>
<div class="t" style="left:350px;top:748px;font-size:15px">找到6条记录, 显示 1 到 6 ,当前第 1 页 共 1 页</div>
<div class="btn" style="left:1079px;top:738px;width:70px;height:36px;background:#f2f2f2;border-color:#d2d2d2"></div>
<div class="t" style="left:1079px;top:748px;width:70px;text-align:center;font-size:15px;color:#888">首页</div>
<div class="btn" style="left:1156px;top:738px;width:84px;height:36px;background:#f2f2f2;border-color:#d2d2d2"></div>
<div class="t" style="left:1156px;top:748px;width:84px;text-align:center;font-size:15px;color:#888">上一页</div>
<div class="btn" style="left:1247px;top:738px;width:85px;height:36px;background:#f2f2f2;border-color:#d2d2d2"></div>
<div class="t" style="left:1247px;top:748px;width:85px;text-align:center;font-size:15px;color:#888">下一页</div>
<div class="btn" style="left:1338px;top:738px;width:70px;height:36px;background:#f2f2f2;border-color:#d2d2d2"></div>
<div class="t" style="left:1338px;top:748px;width:70px;text-align:center;font-size:15px;color:#888">末页</div>
<div class="t" style="left:1419px;top:748px;font-size:15px">每页显示</div>
<div class="inp" style="left:1480px;top:742px;width:89px;height:27px"></div>
<div class="t" style="left:1489px;top:748px;font-size:15px">100</div>
<svg style="left:1549px;top:752px" width="12" height="8"><path d="M0.5 0.5L6 6L11.5 0.5" fill="none" stroke="#555" stroke-width="1.3"/></svg>
<div class="t" style="left:1570px;top:748px;font-size:15px">条记录 跳转到第</div>
<div class="inp" style="left:1680px;top:742px;width:155px;height:27px"></div>
<div class="t" style="left:1835px;top:748px;font-size:15px">页</div>
<div class="btn" style="left:1851px;top:738px;width:62px;height:36px"></div>
<div class="t" style="left:1851px;top:748px;width:62px;text-align:center;font-size:16px">GO</div>
<div class="a" style="left:331px;top:781px;width:1588px;height:6.5px;background:#f2f2f2"></div>
<svg style="left:337px;top:780px" width="32" height="8"><path d="M0.8 6.3L6.3 1L11.8 6.3" fill="none" stroke="#777" stroke-width="1.3"/><path d="M18.3 1L23.8 6.3L29.3 1" fill="none" stroke="#777" stroke-width="1.3"/></svg>
<div class="a" style="left:1118px;top:781.5px;width:3.5px;height:3.5px;background:#a0a0a0"></div>
<div class="a" style="left:1124px;top:781.5px;width:3.5px;height:3.5px;background:#a0a0a0"></div>
<div class="a" style="left:1130px;top:781.5px;width:3.5px;height:3.5px;background:#a0a0a0"></div>
<div class="a" style="left:334px;top:797px;width:1584px;height:177px;border:1px solid #d2d2d2"></div>
<div class="t" style="left:339px;top:790px;padding:0 2px;background:#f7f8fa;font-size:15px;color:#1a1a1a">原文列表</div>
<div class="btn" style="left:344px;top:817px;width:154px;height:36px"></div>
<div class="t" style="left:388.0px;top:827px;font-size:15px">添加原文文件</div>
<svg style="left:364.0px;top:824px" width="20" height="20" viewBox="0 0 20 20"><path d="M16.6 11V2.6Q16.6 0.7 14.7 0.7H5L0 6.5V17Q0 18.9 1.9 18.9H10.5" fill="#fff" stroke="#8a8a8a" stroke-width="1.5"/>
<path d="M5 0.7V6.5H0Z" fill="#c8d3dc" stroke="#8a8a8a" stroke-width="1.3" stroke-linejoin="round"/>
<path d="M5 5.6H11M4 8.6H10M4 11.8H8.5M4 14.3H8" stroke="#b5dbf8" stroke-width="1.4"/>
<path d="M1 18.2H9.5" stroke="#1144cc" stroke-width="1.2"/>
<circle cx="13.6" cy="14.2" r="4.5" fill="#2b8af8"/>
<path d="M13.6 11.5L11.8 14.2H15.4Z M13.6 14V17" stroke="#fff" stroke-width="1" fill="#fff"/></svg>
<div class="btn" style="left:506px;top:817px;width:153px;height:36px"></div>
<div class="t" style="left:549.5px;top:827px;font-size:15px">删除原文文件</div>
<svg style="left:525.5px;top:824px" width="20" height="20" viewBox="0 0 20 20"><path d="M7.5 1.8H11.3" stroke="#45b0f0" stroke-width="1.8" stroke-linecap="round"/>
<path d="M2.6 3.6H16.2" stroke="#45b0f0" stroke-width="2"/>
<path d="M3.8 5.6H15V16.5Q15 18.2 13.3 18.2H5.5Q3.8 18.2 3.8 16.5Z" fill="#2a8ad4"/>
<path d="M6.5 8V15.6M9.4 8V15.6M12.3 8V15.6" stroke="#e8f4fc" stroke-width="1.3" stroke-linecap="round"/></svg>
<div class="btn" style="left:667px;top:817px;width:153px;height:36px"></div>
<div class="t" style="left:710.5px;top:827px;font-size:15px">打开原文文件</div>
<svg style="left:686.5px;top:824px" width="20" height="20" viewBox="0 0 20 20"><rect x="1" y="0.8" width="15.6" height="17.8" rx="2" fill="none" stroke="#86c8ef" stroke-width="1.6"/>
<path d="M4.2 4.2H13.5M4.2 7.9H13.5M4.2 11.7H7.5" stroke="#1f9ae0" stroke-width="1.3" stroke-linecap="round"/>
<ellipse cx="12.6" cy="15" rx="6.6" ry="3.8" fill="#fff"/>
<path d="M6.4 15Q12.4 9.2 18.6 15Q12.4 20.8 6.4 15Z" fill="#fff" stroke="#1e96e0" stroke-width="1.3"/>
<circle cx="12.5" cy="15" r="1.7" fill="#1e96e0"/></svg>
<div class="btn" style="left:829px;top:817px;width:198px;height:36px"></div>
<div class="t" style="left:872.5px;top:827px;font-size:15px">验证并查看原文签名</div>
<svg style="left:848.5px;top:824px" width="20" height="20" viewBox="0 0 20 20"><g fill="none" stroke="#5e5e5e" stroke-width="1.35" stroke-linecap="round">
<path d="M5 1.8Q9.5 -0.3 14 1.8"/>
<path d="M2.2 5.6Q9.5 0.8 16.8 5.6"/>
<path d="M1.2 10.2Q2 4.6 9.5 4.3Q17 4.6 17.9 10.2"/>
<path d="M2.6 15.5Q1.8 7.8 9.5 7.5Q15.8 7.8 15.6 13Q15.4 15.6 14.2 17.5"/>
<path d="M5.2 18.5Q4.4 10.8 9.5 10.6Q13 10.8 12.9 14.2Q12.7 17.2 11.2 19.5"/>
<path d="M8 19.6Q7.2 13.8 9.6 13.6Q10.6 13.8 10.5 15.8Q10.4 17.8 9.4 19.6"/>
</g></svg>
<div class="btn" style="left:1035px;top:817px;width:153px;height:36px"></div>
<div class="t" style="left:1078.5px;top:827px;font-size:15px">导出原文文件</div>
<svg style="left:1054.5px;top:824px" width="20" height="20" viewBox="0 0 20 20"><path d="M4 6.5H8.5L10 8H18.5V18H4Z" fill="#fff" stroke="#5a5a5a" stroke-width="1.1" stroke-linejoin="round"/>
<path d="M4 9.2H18.5" stroke="#5a5a5a" stroke-width="0.8"/>
<path d="M11.2 10.8V15.2M9.5 13.6L11.2 15.3L12.9 13.6" fill="none" stroke="#5a5a5a" stroke-width="1"/></svg>
<div class="btn" style="left:1196px;top:817px;width:154px;height:36px"></div>
<div class="t" style="left:1240.0px;top:827px;font-size:15px">更新原文页数</div>
<svg style="left:1216.0px;top:824px" width="20" height="20" viewBox="0 0 20 20"><path d="M4 6.5H8.5L10 8H18.5V18H4Z" fill="#fff" stroke="#5a5a5a" stroke-width="1.1" stroke-linejoin="round"/>
<path d="M4 9.2H18.5" stroke="#5a5a5a" stroke-width="0.8"/>
<path d="M11.2 10.8V15.2M9.5 13.6L11.2 15.3L12.9 13.6" fill="none" stroke="#5a5a5a" stroke-width="1"/></svg>
<!--B3ICONS-->
<div class="a" style="left:338px;top:859px;width:1577px;height:111px;background:#fff;border:1px solid #cdcdcd"></div>
<div class="a" style="left:339px;top:890px;width:1574px;height:1px;background:#e4e4e4"></div>
<div class="a" style="left:863.4px;top:860px;width:1px;height:30px;background:#e2e2e2"></div>
<div class="a" style="left:1389px;top:860px;width:1px;height:30px;background:#e2e2e2"></div>
<div class="t" style="left:338px;top:868px;width:525.4px;text-align:center;font-size:15px">文件名</div>
<div class="t" style="left:863.4px;top:868px;width:525.6px;text-align:center;font-size:15px">大小</div>
<div class="t" style="left:1389px;top:868px;width:525.0px;text-align:center;font-size:15px">页数</div>
<div class="a" style="left:1px;top:977px;width:1918px;height:42px;background:#003366"></div>
<div class="t" style="left:0;top:989px;width:1920px;text-align:center;font-size:20px;font-weight:bold;color:#fff;letter-spacing:2.25px;-webkit-text-stroke:0">[nhdeep]数字档案管理系统(v2508.1试用版) | 欢迎访问官网 www.nhdeep.com | 咨询qq942225169</div>
</body></html>
